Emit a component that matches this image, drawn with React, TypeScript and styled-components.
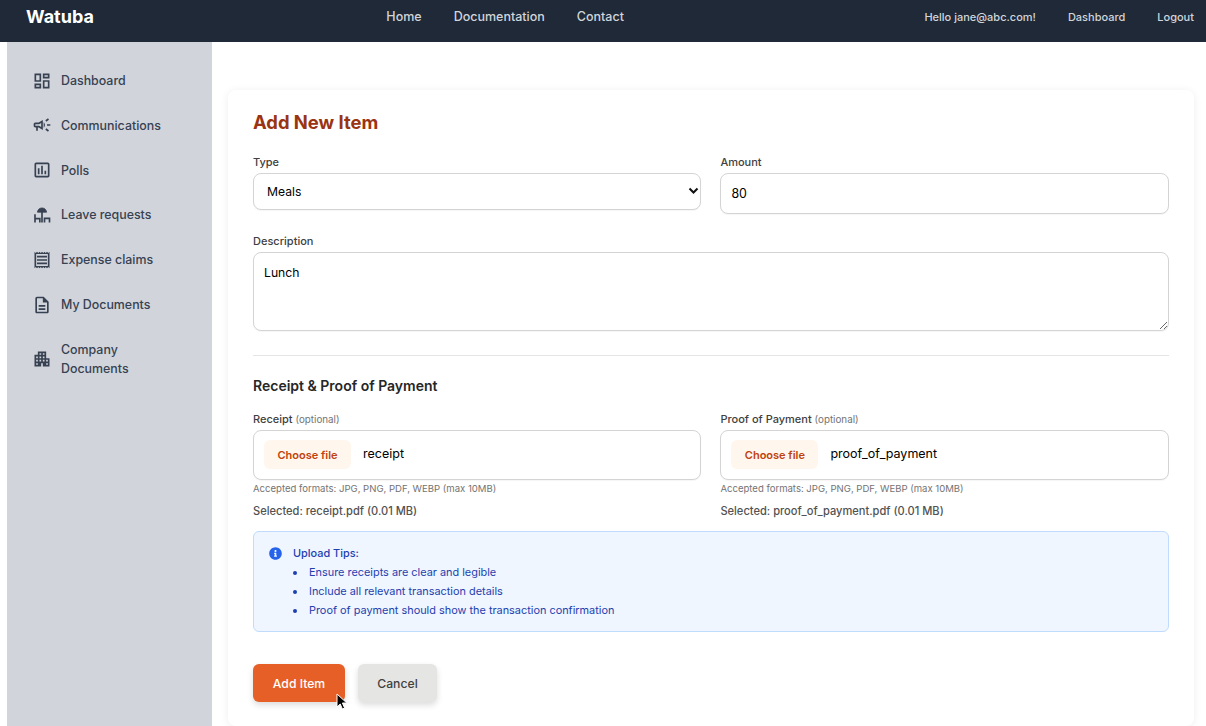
import styled, { createGlobalStyle } from 'styled-components';
import {
  MdOutlineDashboard,
  MdOutlineCampaign,
  MdOutlinePoll,
  MdOutlineReceipt,
  MdOutlineDescription,
  MdApartment,
} from 'react-icons/md';
import { FaInfoCircle } from 'react-icons/fa';

const GlobalStyle = createGlobalStyle`
  * { box-sizing: border-box; }
  html, body {
    margin: 0;
    height: 726px;
    overflow: hidden;
    background: #fff;
    font-family: Inter, "Liberation Sans", sans-serif;
  }
`;

const Page = styled.div`
  position: relative;
  width: 1206px;
  height: 726px;
  overflow: hidden;
`;

const Header = styled.header`
  display: flex;
  justify-content: space-between;
  height: 42px;
  padding: 0 12px 0 26px;
  background: #1f2937;
`;

const Logo = styled.div`
  padding-top: 7px;
  font-size: 18px;
  line-height: 20px;
  font-weight: 700;
  color: #fff;
`;

const CenterNav = styled.nav`
  display: flex;
  gap: 32px;
  padding-top: 8px;
  margin-left: -8px;
`;

const CenterLink = styled.a`
  font-size: 12.5px;
  line-height: 17px;
  font-weight: 500;
  color: #d1d5db;
`;

const UserNav = styled.nav`
  display: flex;
  justify-content: flex-end;
  gap: 32px;
  padding-top: 9px;
`;

const UserLink = styled.a`
  font-size: 11px;
  line-height: 16px;
  font-weight: 500;
  color: #d1d5db;
`;

const Body = styled.div`
  display: flex;
  height: 684px;
  padding-left: 7px;
`;

const Sidebar = styled.aside`
  flex: 0 0 205px;
  padding: 16.3px 0 0 25px;
  background: #d1d5db;
`;

const SideItem = styled.a`
  display: flex;
  align-items: center;
  gap: 9px;
  padding: 12.8px 30px 12.8px 0;
  font-size: 12.4px;
  line-height: 19.2px;
  font-weight: 500;
  color: #374151;

  svg {
    flex: none;
    width: 20px;
    height: 20px;
    margin: -1px 0;
  }
`;

const Main = styled.main`
  flex: 1;
  padding: 48px 12px 0 16px;
`;

const Card = styled.section`
  height: 636px;
  padding: 20px 25px 24px 25px;
  background: #fff;
  border-radius: 8px;
  box-shadow: 0 1px 8px rgba(0, 0, 0, 0.07);
`;

const Title = styled.h1`
  margin: 0 0 20.4px;
  font-size: 18.4px;
  line-height: 25px;
  font-weight: 700;
  color: #9a3412;
`;

const Row = styled.div`
  display: grid;
  grid-template-columns: 448.4px 448.6px;
  gap: 19px;
`;

const Field = styled.div`
  display: flex;
  flex-direction: column;
  min-width: 0;
`;

const Label = styled.label`
  margin-bottom: 3.6px;
  font-size: 11px;
  line-height: 14px;
  font-weight: 500;
  color: #404040;
`;

const Optional = styled.span`
  font-size: 9.8px;
  font-weight: 400;
  color: #737373;
`;

const SelectWrap = styled.div`
  position: relative;
  height: 37px;
`;

const Select = styled.select`
  appearance: none;
  width: 100%;
  height: 37px;
  padding: 0 13px;
  border: 1px solid #d4d4d4;
  border-radius: 8px;
  background: #fff;
  font-family: inherit;
  font-size: 12.2px;
  color: #000;
  box-shadow: 0 1px 1px rgba(0, 0, 0, 0.04);
`;

const Chevron = styled.svg`
  position: absolute;
  top: 14px;
  right: 2px;
  width: 11px;
  height: 8px;
`;

const Input = styled.input`
  width: 100%;
  height: 41px;
  padding: 0 10px;
  border: 1px solid #d4d4d4;
  border-radius: 8px;
  background: #fff;
  font-family: inherit;
  font-size: 12.4px;
  color: #000;
  box-shadow: 0 1px 1px rgba(0, 0, 0, 0.04);
`;

const DescriptionField = styled(Field)`
  margin-top: 20.4px;
`;

const TextArea = styled.textarea`
  display: block;
  width: 100%;
  height: 79px;
  padding: 12px 10px;
  border: 1px solid #d4d4d4;
  border-radius: 8px;
  background: #fff;
  font-family: inherit;
  font-size: 12.2px;
  color: #000;
  box-shadow: 0 1px 1px rgba(0, 0, 0, 0.04);
`;

const Divider = styled.hr`
  margin: 24px 0 20px;
  border: 0;
  border-top: 1px solid #e5e5e5;
`;

const SectionTitle = styled.h2`
  margin: 0 0 15.6px;
  font-size: 14px;
  line-height: 20px;
  font-weight: 600;
  color: #262626;
`;

const FileBox = styled.div`
  display: flex;
  align-items: center;
  gap: 12px;
  height: 50px;
  padding: 0 10px;
  border: 1px solid #d4d4d4;
  border-radius: 8px;
  background: #fff;
  box-shadow: 0 1px 1px rgba(0, 0, 0, 0.04);
`;

const ChooseButton = styled.button`
  width: 87px;
  height: 29px;
  margin-bottom: 1px;
  padding: 0;
  border: 0;
  border-radius: 6px;
  background: #fff7ed;
  font-family: inherit;
  font-size: 11px;
  font-weight: 600;
  color: #c2410c;
`;

const FileName = styled.span`
  margin-top: -3px;
  font-size: 12.5px;
  color: #000;
`;

const Hint = styled.div`
  margin-top: 2px;
  font-size: 9.55px;
  line-height: 13px;
  color: #737373;
`;

const Selected = styled.div`
  margin-top: 8.4px;
  font-size: 11.1px;
  line-height: 15px;
  font-weight: 500;
  color: #525252;
`;

const TipsBox = styled.div`
  display: flex;
  gap: 11px;
  height: 101px;
  margin-top: 12.6px;
  padding: 12px 15px;
  border: 1px solid #bfdbfe;
  border-radius: 6px;
  background: #eff6ff;

  svg {
    flex: none;
    width: 13px;
    height: 13px;
    margin-top: 3px;
    color: #2563eb;
  }
`;

const TipsBody = styled.div`
  font-size: 10.9px;
  line-height: 19px;
  color: #1e40af;
`;

const TipsTitle = styled.div`
  font-weight: 500;
`;

const TipsList = styled.ul`
  margin: 0;
  padding: 0;
  list-style: none;
`;

const Tip = styled.li`
  display: flex;
  align-items: center;
  gap: 12px;

  &::before {
    content: '';
    width: 4px;
    height: 4px;
    border-radius: 50%;
    background: currentColor;
  }
`;

const Actions = styled.div`
  display: flex;
  gap: 13px;
  margin-top: 32px;
`;

const Button = styled.button<{ $primary?: boolean }>`
  height: 38px;
  padding: 0;
  width: ${(p) => (p.$primary ? '92px' : '79px')};
  border: 0;
  border-radius: 6px;
  background: ${(p) => (p.$primary ? '#e65f26' : '#e5e5e3')};
  font-family: inherit;
  font-size: 12.2px;
  font-weight: 500;
  color: ${(p) => (p.$primary ? '#fff' : '#404040')};
  box-shadow: 0 3px 6px rgba(0, 0, 0, 0.14);
`;

const Cursor = styled.svg`
  position: absolute;
  left: 336px;
  top: 693px;
  width: 12px;
  height: 18px;
`;

function LeaveIcon() {
  return (
    <svg viewBox="0 0 24 24" fill="none" stroke="currentColor" strokeWidth="2">
      <path d="M6.5 8.6C7 5.4 9 3.6 12 3.6s5 1.8 5.5 5z" fill="currentColor" strokeWidth="1" />
      <path d="M12 8v13M3.6 11v10M3.6 16.4h5.8V21M15 21v-5h6v5" />
    </svg>
  );
}

const sideItems = [
  { label: 'Dashboard', Icon: MdOutlineDashboard },
  { label: 'Communications', Icon: MdOutlineCampaign },
  { label: 'Polls', Icon: MdOutlinePoll },
  { label: 'Leave requests', Icon: LeaveIcon },
  { label: 'Expense claims', Icon: MdOutlineReceipt },
  { label: 'My Documents', Icon: MdOutlineDescription },
  { label: 'Company Documents', Icon: MdApartment },
];

const tips = [
  'Ensure receipts are clear and legible',
  'Include all relevant transaction details',
  'Proof of payment should show the transaction confirmation',
];

const uploads = [
  { label: 'Receipt', name: 'receipt', selected: 'receipt.pdf' },
  { label: 'Proof of Payment', name: 'proof_of_payment', selected: 'proof_of_payment.pdf' },
];

export default function App() {
  return (
    <Page>
      <GlobalStyle />
      <Header>
        <Logo>Watuba</Logo>
        <CenterNav>
          <CenterLink>Home</CenterLink>
          <CenterLink>Documentation</CenterLink>
          <CenterLink>Contact</CenterLink>
        </CenterNav>
        <UserNav>
          <UserLink>Hello jane@abc.com!</UserLink>
          <UserLink>Dashboard</UserLink>
          <UserLink>Logout</UserLink>
        </UserNav>
      </Header>
      <Body>
        <Sidebar>
          {sideItems.map(({ label, Icon }) => (
            <SideItem key={label}>
              <Icon />
              <span>{label}</span>
            </SideItem>
          ))}
        </Sidebar>
        <Main>
          <Card>
            <Title>Add New Item</Title>
            <Row>
              <Field>
                <Label>Type</Label>
                <SelectWrap>
                  <Select defaultValue="Meals">
                    <option>Meals</option>
                    <option>Travel</option>
                  </Select>
                  <Chevron viewBox="0 0 11 8">
                    <path d="M1.5 1.5 5.5 5.5 9.5 1.5" fill="none" stroke="#111" strokeWidth="2" />
                  </Chevron>
                </SelectWrap>
              </Field>
              <Field>
                <Label>Amount</Label>
                <Input defaultValue="80" />
              </Field>
            </Row>
            <DescriptionField>
              <Label>Description</Label>
              <TextArea defaultValue="Lunch" />
            </DescriptionField>
            <Divider />
            <SectionTitle>Receipt &amp; Proof of Payment</SectionTitle>
            <Row>
              {uploads.map((u) => (
                <Field key={u.label}>
                  <Label>
                    {u.label} <Optional>(optional)</Optional>
                  </Label>
                  <FileBox>
                    <ChooseButton>Choose file</ChooseButton>
                    <FileName>{u.name}</FileName>
                  </FileBox>
                  <Hint>Accepted formats: JPG, PNG, PDF, WEBP (max 10MB)</Hint>
                  <Selected>Selected: {u.selected} (0.01 MB)</Selected>
                </Field>
              ))}
            </Row>
            <TipsBox>
              <FaInfoCircle />
              <TipsBody>
                <TipsTitle>Upload Tips:</TipsTitle>
                <TipsList>
                  {tips.map((t) => (
                    <Tip key={t}>{t}</Tip>
                  ))}
                </TipsList>
              </TipsBody>
            </TipsBox>
            <Actions>
              <Button $primary>Add Item</Button>
              <Button>Cancel</Button>
            </Actions>
          </Card>
        </Main>
      </Body>
      <Cursor viewBox="0 0 12 18">
        <path d="M1 1v13l3.2-3 2.2 5 2.2-1-2.2-5h4.4z" fill="#000" stroke="#fff" strokeWidth="1" />
      </Cursor>
    </Page>
  );
}
